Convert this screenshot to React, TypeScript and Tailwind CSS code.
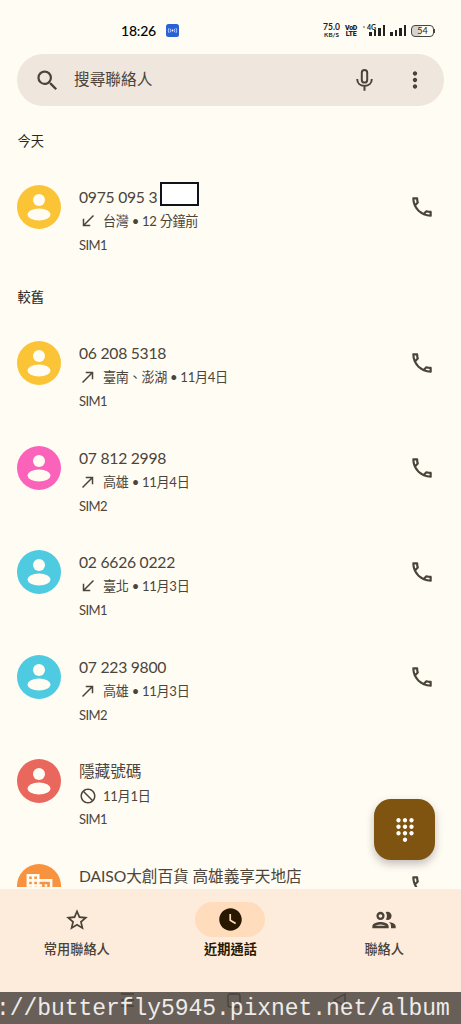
import { type ComponentType } from 'react';
import {
  MdBlock,
  MdCallMade,
  MdCallReceived,
  MdDialpad,
  MdDomain,
  MdMoreVert,
  MdOutlineLocalPhone,
  MdOutlinePeople,
  MdSearch,
  MdStarOutline,
  MdWatchLater
} from 'react-icons/md';

type CallKind = 'incoming' | 'outgoing' | 'blocked';

interface Call {
  id: string;
  title: string;
  color: string;
  kind?: CallKind;
  detail?: string;
  sim?: string;
  masked?: boolean;
  business?: boolean;
}

const today: Call[] = [
  { id: 't1', title: '0975 095 3', color: 'bg-[#fbc436]', kind: 'incoming', detail: '台灣 • 12 分鐘前', sim: 'SIM1', masked: true }
];

const older: Call[] = [
  { id: 'o1', title: '06 208 5318', color: 'bg-[#fbc436]', kind: 'outgoing', detail: '臺南、澎湖 • 11月4日', sim: 'SIM1' },
  { id: 'o2', title: '07 812 2998', color: 'bg-[#fb63bb]', kind: 'outgoing', detail: '高雄 • 11月4日', sim: 'SIM2' },
  { id: 'o3', title: '02 6626 0222', color: 'bg-[#4fcbe1]', kind: 'incoming', detail: '臺北 • 11月3日', sim: 'SIM1' },
  { id: 'o4', title: '07 223 9800', color: 'bg-[#4fcbe1]', kind: 'outgoing', detail: '高雄 • 11月3日', sim: 'SIM2' },
  { id: 'o5', title: '隱藏號碼', color: 'bg-[#e9675d]', kind: 'blocked', detail: '11月1日', sim: 'SIM1' },
  { id: 'o6', title: 'DAISO大創百貨 高雄義享天地店', color: 'bg-[#f9923e]', business: true }
];

const kindIcons: Record<CallKind, ComponentType<{ className?: string }>> = {
  incoming: MdCallReceived,
  outgoing: MdCallMade,
  blocked: MdBlock
};

const StatusBar = () => (
  <div className="flex h-[54px] shrink-0 items-center pt-[7px] pr-[26px] pl-[121px] text-black">
    <span className="w-[45px] text-[14px] font-medium tracking-[-0.2px]">18:26</span>
    <svg viewBox="0 0 13 13" className="h-[13px] w-[13px]" fill="none">
      <rect width="13" height="13" rx="2.5" fill="#2b62d3" />
      <circle cx="6.5" cy="6.5" r="0.9" fill="#fff" />
      <path d="M4.7 4.8q-1 1.7 0 3.4M8.3 4.8q1 1.7 0 3.4M3 4q-1.4 2.5 0 5M10 4q1.4 2.5 0 5" stroke="#cfe0ff" strokeWidth="0.8" />
    </svg>
    <div className="ml-auto flex items-center text-[#222]">
      <div className="flex w-[17px] flex-col items-center font-bold">
        <span className="text-[8.5px] leading-[7px]">75.0</span>
        <span className="mt-px text-[6.3px] leading-[6px]">KB/S</span>
      </div>
      <div className="ml-[4px] flex w-[14px] flex-col items-center font-[Roboto] font-black tracking-[-0.3px]">
        <span className="text-[7px] leading-[6px]">VoD</span>
        <span className="text-[7px] leading-[6px]">LTE</span>
      </div>
      <div className="relative ml-[5px] flex h-[13px] w-[22px] items-end justify-end gap-[2px] pb-px">
        <span className="absolute top-[-1px] left-[4px] text-[7px] leading-[8px] font-bold">4G</span>
        <span className="absolute top-[2px] left-0 h-[2px] w-[2px] bg-[#aaa]" />
        <span className="h-[4px] w-[2.5px] bg-[#222]" />
        <span className="h-[6px] w-[2.5px] bg-[#222]" />
        <span className="h-[8px] w-[2.5px] bg-[#222]" />
        <span className="h-[11px] w-[2.5px] bg-[#222]" />
      </div>
      <div className="ml-[5px] flex h-[13px] items-end gap-[2px] pb-px">
        <span className="h-[4px] w-[2.5px] bg-[#222]" />
        <span className="h-[6px] w-[2.5px] bg-[#222]" />
        <span className="h-[8px] w-[2.5px] bg-[#222]" />
        <span className="h-[11px] w-[2.5px] bg-[#222]" />
      </div>
      <div className="ml-[5px] flex h-[12px] w-[23px] items-center justify-center rounded-[4px] border border-[#444] bg-linear-to-r from-[#d5d3ca] from-30% to-transparent to-50%">
        <span className="text-[9px] leading-none">54</span>
      </div>
      <span className="h-[4px] w-px bg-[#444]" />
    </div>
  </div>
);

const SearchBar = () => (
  <div className="mr-[17px] ml-[17px] flex h-[52px] shrink-0 items-center rounded-full bg-[#efe6dd] pr-[16px] pl-[17px] text-[#4b4238]">
    <MdSearch className="h-[27px] w-[27px]" />
    <span className="ml-[13px] flex-1 text-[15.7px]">搜尋聯絡人</span>
    <svg viewBox="0 0 24 24" className="h-[25px] w-[25px]" fill="none" stroke="currentColor" strokeWidth="1.9">
      <rect x="9.4" y="2" width="5.2" height="12" rx="2.6" />
      <path d="M5 10.6c0 4 3 6.6 7 6.6s7-2.6 7-6.6M12 17.2v4.6" />
    </svg>
    <MdMoreVert className="ml-[25px] h-[26px] w-[26px]" />
  </div>
);

const SectionTitle = ({ label }: { label: string }) => (
  <h2 className="flex h-[51.5px] shrink-0 items-end pb-[3.5px] pl-[17.5px] text-[13.3px] leading-[20px] text-[#292621]">{label}</h2>
);

const Avatar = ({ color, business }: { color: string; business?: boolean }) => (
  <div className={`flex h-[44px] w-[44px] shrink-0 items-center justify-center rounded-full text-[#fffcf3] ${color}`}>
    {business ? (
      <MdDomain className="h-[31px] w-[31px]" />
    ) : (
      <svg viewBox="0 0 44 44" className="h-[44px] w-[44px]" fill="currentColor">
        <circle cx="22" cy="15" r="6" />
        <ellipse cx="22" cy="29.5" rx="11.5" ry="6" />
      </svg>
    )}
  </div>
);

const CallRow = ({ call }: { call: Call }) => {
  const KindIcon = call.kind ? kindIcons[call.kind] : null;

  return (
    <div className="flex h-[104.6px] shrink-0 items-start pr-[26px] pl-[17px] text-[#4b443a]">
      <div className="pt-[30.4px]">
        <Avatar color={call.color} business={call.business} />
      </div>
      <div className="ml-[18px] min-w-0 flex-1 pt-[30.4px]">
        <div className="flex h-[25px] items-center text-[15.7px] leading-[25px] whitespace-nowrap">
          <span className={/^\d/.test(call.title) ? 'tracking-[-0.25px]' : 'tracking-[-0.1px]'}>{call.title}</span>
          {call.masked && <span className="mt-[-7px] ml-[3px] h-[24px] w-[39px] border-2 border-[#10131c] bg-white" />}
        </div>
        {KindIcon && (
          <div className="flex h-[24px] items-center text-[13.1px] tracking-[-0.3px] whitespace-nowrap">
            <KindIcon className={call.kind === 'blocked' ? 'h-[18px] w-[18px] -scale-x-100' : 'h-[18px] w-[18px] -translate-y-px'} />
            <span className="ml-[6px]">{call.detail}</span>
          </div>
        )}
        {call.sim && <div className="text-[13px] leading-[22px] tracking-[-0.6px]">{call.sim}</div>}
      </div>
      {call.kind !== 'blocked' && (
        <button className="mt-[39.4px]">
          <MdOutlineLocalPhone className="h-[26px] w-[26px]" />
        </button>
      )}
    </div>
  );
};

const BottomNav = () => (
  <nav className="grid h-[135px] shrink-0 grid-cols-3 bg-[#fdecdb] pt-[13px] text-[#4b4238]">
    <div className="flex flex-col items-center">
      <span className="flex h-[35px] items-center">
        <MdStarOutline className="h-[26px] w-[26px]" />
      </span>
      <span className="mt-[3px] text-[13.2px] font-medium">常用聯絡人</span>
    </div>
    <div className="flex flex-col items-center text-[#291800]">
      <span className="flex h-[35px] w-[70px] items-center justify-center rounded-full bg-[#ffdcbb]">
        <MdWatchLater className="h-[27px] w-[27px]" />
      </span>
      <span className="mt-[3px] text-[13.2px] font-bold">近期通話</span>
    </div>
    <div className="flex flex-col items-center">
      <span className="flex h-[35px] items-center">
        <MdOutlinePeople className="h-[28px] w-[28px]" />
      </span>
      <span className="mt-[3px] text-[13.2px] font-medium">聯絡人</span>
    </div>
  </nav>
);

// Dimmed strip over the system navigation buttons
const Watermark = () => (
  <div className="absolute bottom-0 left-0 h-[32px] w-full overflow-hidden bg-[#675f58]">
    <svg viewBox="0 0 461 32" className="absolute inset-0 h-[32px] w-[461px]" fill="none" stroke="#47413c" strokeWidth="1.3">
      <path d="M121 2h13M121 8h13M121 14h13" />
      <rect x="228" y="2" width="12" height="13" rx="2" />
      <path d="M345 2v12l-11-6z" />
    </svg>
    <span className="relative ml-[-4px] block font-['Liberation_Mono'] text-[23px] leading-[34px] tracking-[-0.05px] whitespace-nowrap text-[#eeebe8]">
      ://butterfly5945.pixnet.net/album
    </span>
  </div>
);

export default function App() {
  return (
    <div className="relative flex h-[1024px] w-[461px] flex-col overflow-hidden bg-[#fffcf3] font-[Lato,'Noto_Sans_CJK_TC',sans-serif]">
      <StatusBar />
      <SearchBar />
      <main className="mb-[2.5px] flex min-h-0 flex-1 flex-col overflow-hidden">
        <div className="mt-[-3px] flex flex-col">
          <SectionTitle label="今天" />
          {today.map((call) => (
            <CallRow key={call.id} call={call} />
          ))}
          <SectionTitle label="較舊" />
          {older.map((call) => (
            <CallRow key={call.id} call={call} />
          ))}
        </div>
      </main>
      <BottomNav />
      <button className="absolute top-[799px] left-[374px] flex h-[61px] w-[61px] items-center justify-center rounded-[17px] bg-[#7e5410] text-white shadow-[0_4px_8px_rgba(60,45,60,0.3)]">
        <MdDialpad className="h-[26px] w-[26px]" />
      </button>
      <Watermark />
    </div>
  );
}
